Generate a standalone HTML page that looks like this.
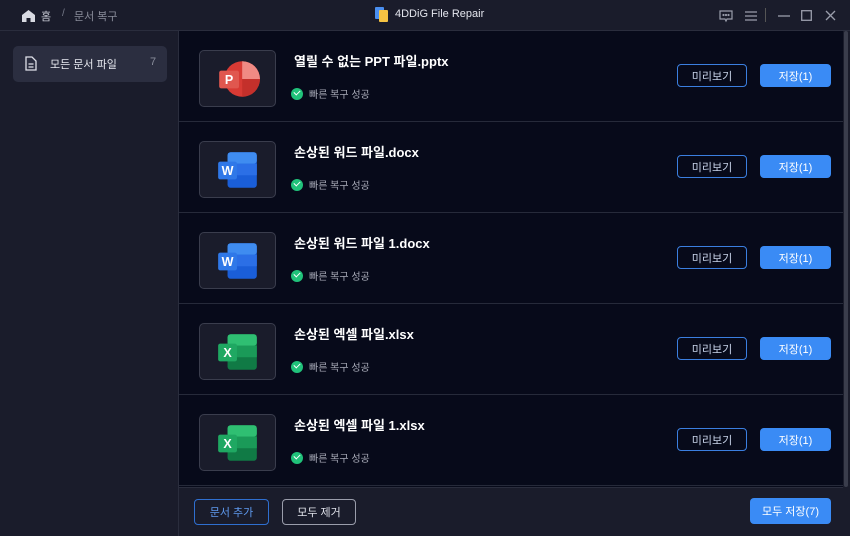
<!DOCTYPE html>
<html><head><meta charset="utf-8"><style>
*{margin:0;padding:0;box-sizing:border-box}
body{width:850px;height:536px;overflow:hidden;background:#0a0d1d;font-family:"Liberation Sans","Noto Sans CJK KR",sans-serif;position:relative;color:#fff}
.title{position:absolute;left:0;top:0;width:850px;height:31px;background:#1a1c2b;border-bottom:1px solid #2a2d3d}
.side{position:absolute;left:0;top:31px;width:179px;height:505px;background:#1a1c2b;border-right:1px solid #2a2d3d}
.main{position:absolute;left:179px;top:31px;width:664px;height:456px;background:#070a1a}
.row{position:absolute;left:0;width:664px;height:91px;border-bottom:1px solid #262a3a}
.ibox{position:absolute;left:20px;top:19px;width:77px;height:57px;border:1px solid #3a3d4d;border-radius:5px;background:#1a1c2b}
.name{position:absolute;left:115px;top:20px;font-size:13px;font-weight:bold;color:#fff}
.st{position:absolute;left:112px;top:55px;font-size:10px;color:#a8abb8;display:flex;align-items:center;gap:6px}
.chk{width:12px;height:12px;border-radius:50%;background:#20c27a;display:inline-block;position:relative}
.chk:after{content:"";position:absolute;left:3px;top:2.5px;width:5px;height:3px;border-left:1.6px solid #fff;border-bottom:1.6px solid #fff;transform:rotate(-45deg)}
.btn{display:flex;align-items:center;justify-content:center;font-size:11px;border-radius:4px;position:absolute}
.bp{left:498px;top:33px;width:70px;height:23px;border:1px solid #3b7fe0;color:#c9d4ea}
.bs{left:581px;top:33px;width:71px;height:23px;background:#3a8bf5;color:#fff}
.foot{position:absolute;left:179px;top:487px;width:664px;height:49px;background:#1a1c2b;border-top:1px solid #2a2d3d}
</style></head><body>
<div class="title">
<svg style="position:absolute;left:22px;top:10px" width="13" height="12" viewBox="0 0 13 12"><path d="M6.5 0L0 5v7h4.5V8h4v4H13V5z" fill="#d8dae2"/></svg>
<span style="position:absolute;left:41px;top:8px;font-size:11px;color:#c8cad4">홈</span>
<span style="position:absolute;left:62px;top:8px;font-size:10px;color:#777b8a">/</span>
<span style="position:absolute;left:74px;top:8px;font-size:11px;color:#8a8d9b">문서 복구</span>
<svg style="position:absolute;left:375px;top:7px" width="14" height="15" viewBox="0 0 14 15"><rect x="0" y="0" width="9" height="12" rx="1" fill="#4a8ff0"/><rect x="4" y="3" width="9" height="12" rx="1" fill="#f6c343"/></svg>
<span style="position:absolute;left:395px;top:8px;font-size:11px;color:#e4e6ee">4DDiG File Repair</span>
<svg style="position:absolute;left:719px;top:10px" width="14" height="13" viewBox="0 0 14 13" fill="none" stroke="#9a9dab" stroke-width="1.2"><path d="M1 1h12v8H8l-1 2-1-2H1z"/><circle cx="4.5" cy="5" r=".5"/><circle cx="7" cy="5" r=".5"/><circle cx="9.5" cy="5" r=".5"/></svg>
<svg style="position:absolute;left:745px;top:11px" width="12" height="10" stroke="#9a9dab" stroke-width="1.2"><path d="M0 1h12M0 5h12M0 9h12"/></svg>
<div style="position:absolute;left:765px;top:8px;width:1px;height:14px;background:#555"></div>
<svg style="position:absolute;left:778px;top:15px" width="12" height="2"><path d="M0 1h12" stroke="#9a9dab" stroke-width="1.3"/></svg>
<svg style="position:absolute;left:801px;top:10px" width="11" height="11"><rect x=".7" y=".7" width="9.6" height="9.6" fill="none" stroke="#9a9dab" stroke-width="1.3"/></svg>
<svg style="position:absolute;left:825px;top:10px" width="11" height="11"><path d="M1 1l9 9M10 1l-9 9" stroke="#9a9dab" stroke-width="1.3"/></svg>
</div>
<div class="side">
<div style="position:absolute;left:13px;top:15px;width:154px;height:36px;background:#2b2e40;border-radius:5px">
<svg style="position:absolute;left:12px;top:10px" width="12" height="15" viewBox="0 0 12 15" fill="none" stroke="#e0e2ea" stroke-width="1.3"><path d="M1 1h6l4 4v9H1z"/><path d="M3.5 8h5M3.5 11h5"/></svg>
<span style="position:absolute;left:37px;top:10px;font-size:11px;color:#e8eaf0">모든 문서 파일</span>
<span style="position:absolute;left:137px;top:10px;font-size:11px;color:#8a8d9b">7</span>
</div></div>
<div class="main">
<div class="row" style="top:0">
<div class="ibox"><svg style="position:absolute;left:15px;top:9px" width="46" height="38" viewBox="0 0 44 36"><circle cx="26" cy="18" r="17" fill="#d83a34"/><path d="M26 1a17 17 0 0 1 17 17H26z" fill="#f08a84"/><path d="M26 18h17a17 17 0 0 1-17 17z" fill="#c4302b"/><rect x="4" y="10" width="19" height="17" rx="2" fill="#e0574f"/><text x="13.5" y="23" font-size="12" font-weight="bold" fill="#fff" text-anchor="middle" font-family="Liberation Sans">P</text></svg></div>
<div class="name">열릴 수 없는 PPT 파일.pptx</div>
<div class="st"><span class="chk"></span>빠른 복구 성공</div>
<div class="btn bp">미리보기</div><div class="btn bs">저장(1)</div></div>
<div class="row" style="top:91px">
<div class="ibox"><svg style="position:absolute;left:15px;top:9px" width="46" height="38" viewBox="0 0 44 36"><rect x="12" y="1" width="28" height="34" rx="3" fill="#1a5ed8"/><rect x="12" y="1" width="28" height="11" rx="3" fill="#3f8cf0"/><rect x="12" y="12" width="28" height="11" fill="#2b6fe6"/><rect x="3" y="10" width="18" height="17" rx="2" fill="#2f78e8"/><text x="12" y="23" font-size="12" font-weight="bold" fill="#fff" text-anchor="middle" font-family="Liberation Sans">W</text></svg></div>
<div class="name">손상된 워드 파일.docx</div>
<div class="st"><span class="chk"></span>빠른 복구 성공</div>
<div class="btn bp">미리보기</div><div class="btn bs">저장(1)</div></div>
<div class="row" style="top:182px">
<div class="ibox"><svg style="position:absolute;left:15px;top:9px" width="46" height="38" viewBox="0 0 44 36"><rect x="12" y="1" width="28" height="34" rx="3" fill="#1a5ed8"/><rect x="12" y="1" width="28" height="11" rx="3" fill="#3f8cf0"/><rect x="12" y="12" width="28" height="11" fill="#2b6fe6"/><rect x="3" y="10" width="18" height="17" rx="2" fill="#2f78e8"/><text x="12" y="23" font-size="12" font-weight="bold" fill="#fff" text-anchor="middle" font-family="Liberation Sans">W</text></svg></div>
<div class="name">손상된 워드 파일 1.docx</div>
<div class="st"><span class="chk"></span>빠른 복구 성공</div>
<div class="btn bp">미리보기</div><div class="btn bs">저장(1)</div></div>
<div class="row" style="top:273px">
<div class="ibox"><svg style="position:absolute;left:15px;top:9px" width="46" height="38" viewBox="0 0 44 36"><rect x="12" y="1" width="28" height="34" rx="3" fill="#107a45"/><rect x="12" y="1" width="28" height="11" rx="3" fill="#2fbf72"/><rect x="12" y="12" width="28" height="11" fill="#1a9a58"/><rect x="3" y="10" width="18" height="17" rx="2" fill="#1fa862"/><text x="12" y="23" font-size="12" font-weight="bold" fill="#fff" text-anchor="middle" font-family="Liberation Sans">X</text></svg></div>
<div class="name">손상된 엑셀 파일.xlsx</div>
<div class="st"><span class="chk"></span>빠른 복구 성공</div>
<div class="btn bp">미리보기</div><div class="btn bs">저장(1)</div></div>
<div class="row" style="top:364px">
<div class="ibox"><svg style="position:absolute;left:15px;top:9px" width="46" height="38" viewBox="0 0 44 36"><rect x="12" y="1" width="28" height="34" rx="3" fill="#107a45"/><rect x="12" y="1" width="28" height="11" rx="3" fill="#2fbf72"/><rect x="12" y="12" width="28" height="11" fill="#1a9a58"/><rect x="3" y="10" width="18" height="17" rx="2" fill="#1fa862"/><text x="12" y="23" font-size="12" font-weight="bold" fill="#fff" text-anchor="middle" font-family="Liberation Sans">X</text></svg></div>
<div class="name">손상된 엑셀 파일 1.xlsx</div>
<div class="st"><span class="chk"></span>빠른 복구 성공</div>
<div class="btn bp">미리보기</div><div class="btn bs">저장(1)</div></div>
</div>
<div style="position:absolute;left:843px;top:31px;width:7px;height:505px;background:#1a1c2b"><div style="position:absolute;left:1px;top:0;width:4px;height:456px;background:#3a3d4c;border-radius:2px"></div></div>
<div class="foot">
<div class="btn" style="left:15px;top:11px;width:75px;height:26px;border:1px solid #2f6fd0;color:#5f9af0">문서 추가</div>
<div class="btn" style="left:103px;top:11px;width:74px;height:26px;border:1px solid #9a9dab;color:#e0e2ea">모두 제거</div>
<div class="btn" style="left:571px;top:10px;width:81px;height:26px;background:#3a8bf5;color:#fff">모두 저장(7)</div>
</div>
</body></html>
